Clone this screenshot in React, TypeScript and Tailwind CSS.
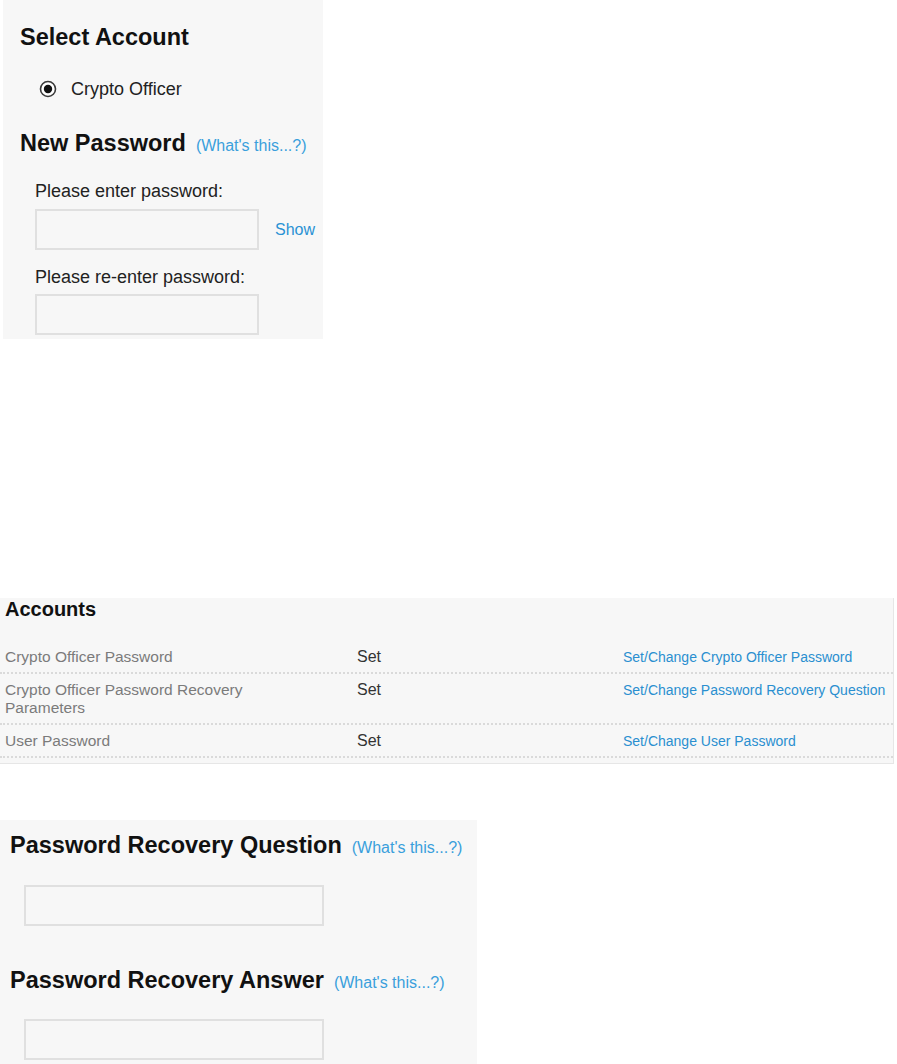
import React from 'react';

const font = { fontFamily: '"Liberation Sans", Arial, sans-serif' };

function WhatsThis() {
  return <a className="ml-[10px] text-[16px] text-[#3a9fdc] cursor-pointer">(What's this...?)</a>;
}

function Heading({ children, link = false }: { children: React.ReactNode; link?: boolean }) {
  return (
    <div className="flex items-baseline">
      <h2 className="text-[23.5px] leading-[28px] font-bold text-[#111]">{children}</h2>
      {link && <WhatsThis />}
    </div>
  );
}

function TextBox({ w }: { w: string }) {
  return <input type="text" className={`${w} h-[41px] border-2 border-[#e0e0e0] bg-[#f7f7f7] outline-none`} />;
}

const rows = [
  { name: 'Crypto Officer Password', link: 'Set/Change Crypto Officer Password' },
  { name: 'Crypto Officer Password Recovery Parameters', link: 'Set/Change Password Recovery Question' },
  { name: 'User Password', link: 'Set/Change User Password' },
];

export default function App() {
  return (
    <div className="min-h-[1064px] bg-white" style={font}>
      {/* select account / new password */}
      <div className="ml-[3px] w-[320px] bg-[#f7f7f7] pt-[23px] pl-[17px] pb-[4px]">
        <Heading>Select Account</Heading>
        <label className="mt-[26px] ml-[19px] flex h-[24px] items-center">
          <svg width="18" height="18" viewBox="0 0 18 18">
            <circle cx="9" cy="9" r="7.5" fill="#fff" stroke="#3a3a3a" strokeWidth="1.6" />
            <circle cx="9" cy="9" r="4.2" fill="#111" />
          </svg>
          <span className="ml-[14px] text-[18px] text-[#222]">Crypto Officer</span>
        </label>
        <div className="mt-[28px]">
          <Heading link>New Password</Heading>
        </div>
        <div className="pl-[15px]">
          <div className="mt-[22px] text-[18px] leading-[22px] text-[#222]">Please enter password:</div>
          <div className="mt-[7px] flex items-center">
            <TextBox w="w-[224px]" />
            <a className="ml-[16px] text-[16px] text-[#2a92d4] cursor-pointer">Show</a>
          </div>
          <div className="mt-[16px] text-[18px] leading-[22px] text-[#222]">Please re-enter password:</div>
          <div className="mt-[6px]">
            <TextBox w="w-[224px]" />
          </div>
        </div>
      </div>

      {/* accounts table */}
      <div className="mt-[259px] w-[894px] border-r border-b border-[#e6e6e6] bg-[#f7f7f7]">
        <h2 className="pl-[5px] text-[20px] leading-[22px] font-bold text-[#111]">Accounts</h2>
        <div className="mt-[21px]">
          {rows.map((r) => (
            <div key={r.name} className="grid grid-cols-[335px_283px_1fr] border-b-2 border-dotted border-[#dadada] pt-[7px] pb-[6px]">
              <div className="max-w-[260px] pl-[5px] text-[15.5px] leading-[18px] text-[#7b7b7b]">{r.name}</div>
              <div className="pl-[22px] text-[16px] leading-[18px] text-[#333]">Set</div>
              <a className="pl-[5px] text-[14px] leading-[18px] text-[#2a8fd0] cursor-pointer">{r.link}</a>
            </div>
          ))}
        </div>
        <div className="h-[5px]" />
      </div>

      {/* recovery question / answer */}
      <div className="mt-[56px] w-[477px] bg-[#f7f7f7] pt-[11px] pl-[10px] pb-[8px]">
        <Heading link>Password Recovery Question</Heading>
        <div className="mt-[25px] pl-[14px]">
          <TextBox w="w-[300px]" />
        </div>
        <div className="mt-[40px]">
          <Heading link>Password Recovery Answer</Heading>
        </div>
        <div className="mt-[24px] pl-[14px]">
          <TextBox w="w-[300px]" />
        </div>
      </div>
    </div>
  );
}
